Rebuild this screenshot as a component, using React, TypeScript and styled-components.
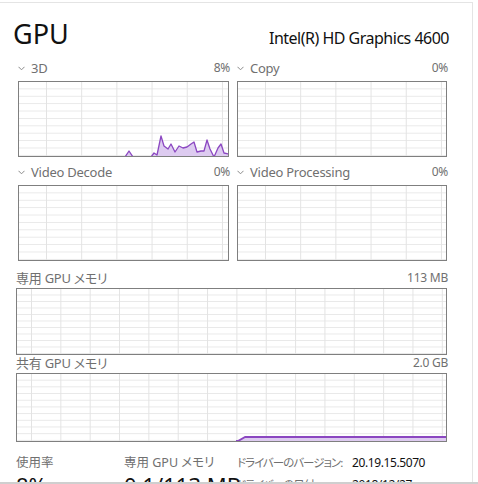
import styled, { createGlobalStyle } from 'styled-components';

const GlobalStyle = createGlobalStyle`
	html, body {
		margin: 0;
		height: 484px;
		overflow: hidden;
		background: #ffffff;
		font-family: 'Segoe UI', 'Noto Sans', 'Noto Sans CJK JP', sans-serif;
		font-feature-settings: 'palt';
	}
`;

const PURPLE = '#8b47c1';
const PURPLE_FILL = '#ddcbf0';
const MUTED = '#707070';

const Frame = styled.div`
	width: 473px;
	box-sizing: border-box;
	margin-top: 2px;
	padding: 13px 25px 0 16px;
	border-top: 1px solid #e4e4e4;
	border-right: 1px solid #e4e4e4;
	height: 482px;
`;

const Header = styled.div`
	display: flex;
	justify-content: space-between;
	align-items: baseline;
	height: 36px;
	margin: 0 -2px 8px -3px;
`;

const Title = styled.div`
	font-size: 27px;
	line-height: 36px;
	color: #111;
`;

const Adapter = styled.div`
	font-size: 16px;
	line-height: 36px;
	letter-spacing: -0.5px;
	color: #111;
`;

const SmallGrid = styled.div`
	display: grid;
	grid-template-columns: 211px 210px;
	column-gap: 8px;
	row-gap: 7px;
	padding: 0 1px 0 2px;
`;

const Panel = styled.div`
	display: flex;
	flex-direction: column;
`;

const Label = styled.div<{ $top?: number; $bottom?: number }>`
	display: flex;
	justify-content: space-between;
	align-items: center;
	font-size: 13px;
	line-height: 16px;
	height: 16px;
	letter-spacing: -0.25px;
	color: ${MUTED};
	margin-top: ${p => p.$top ?? 0}px;
	margin-bottom: ${p => p.$bottom ?? 0}px;
	white-space: nowrap;
`;

const LabelName = styled.span`
	display: flex;
	align-items: center;
	gap: 6px;
`;

const Value = styled.span`
	margin-right: -1px;
	font-size: 12px;
`;

const Chart = styled.div<{ $h: number; $cx: number; $cy: number; $ox: number }>`
	height: ${p => p.$h}px;
	box-sizing: border-box;
	border: 1px solid #7f7f7f;
	background-color: #fff;
	background-image: linear-gradient(to right, #e3e3e3 1px, transparent 1px),
		linear-gradient(to bottom, #e8e8e8 1px, transparent 1px);
	background-size: ${p => p.$cx}px 100%, 100% ${p => p.$cy}px;
	background-position: ${p => p.$ox}px 0, 0 ${p => p.$cy - 1}px;
	overflow: hidden;
`;

const Plot = styled.svg`
	display: block;
	width: 100%;
	height: 100%;
`;

const Stats = styled.div`
	display: grid;
	grid-template-columns: 108px 113px auto;
	margin-top: 13px;
`;

const StatCol = styled.div`
	display: flex;
	flex-direction: column;
`;

const StatLabel = styled.div`
	font-size: 12.5px;
	line-height: 16px;
	color: ${MUTED};
	white-space: nowrap;
`;

const StatBig = styled.div`
	font-size: 22px;
	line-height: 28px;
	color: #111;
	white-space: nowrap;
`;

const DriverGrid = styled.div`
	display: grid;
	grid-template-columns: 115px auto;
	font-size: 12px;
	line-height: 15px;
	white-space: nowrap;
`;

const DriverKey = styled.div`
	color: ${MUTED};
	font-size: 11.5px;
	letter-spacing: -1px;
`;

const DriverVal = styled.div`
	color: #111;
	letter-spacing: -0.4px;
`;

const BottomEdge = styled.div`
	position: fixed;
	left: 0;
	right: 0;
	bottom: 0;
	height: 2px;
	background: #cfcfcf;
`;

const Chevron = () => (
	<svg width="7" height="5" viewBox="0 0 7 5">
		<polyline points="0.5,0.8 3.5,3.8 6.5,0.8" fill="none" stroke="#8a8a8a" strokeWidth="1" />
	</svg>
);

const pts3d: [number, number][] = [
	[104, 75], [106, 75], [110, 69], [114, 75], [130, 75], [132, 75], [135, 71], [138, 73], [142, 54],
	[145, 64], [149, 67], [152, 62], [156, 70], [160, 64], [164, 66], [168, 65], [172, 62],
	[175, 60], [178, 70], [182, 69], [185, 69], [188, 58], [191, 67], [195, 75], [199, 66],
	[202, 62], [205, 71], [210, 72],
];

interface TraceProps {
	w: number;
	h: number;
	points: [number, number][];
	weight?: number;
}

const Trace = ({ w, h, points, weight = 1.3 }: TraceProps) => {
	const line = points.map(p => p.join(',')).join(' ');
	const first = points[0];
	const last = points[points.length - 1];
	const area = `${first[0]},${h} ${line} ${last[0]},${h}`;
	return (
		<Plot viewBox={`0 0 ${w} ${h}`} preserveAspectRatio="none">
			<polygon points={area} fill={PURPLE_FILL} />
			<polyline points={line} fill="none" stroke={PURPLE} strokeWidth={weight} strokeLinejoin="round" />
		</Plot>
	);
};

const engines = [
	{ name: '3D', value: '8%', trace: pts3d },
	{ name: 'Copy', value: '0%' },
	{ name: 'Video Decode', value: '0%' },
	{ name: 'Video Processing', value: '0%' },
];

const App = () => (
	<>
		<GlobalStyle />
		<Frame>
			<Header>
				<Title>GPU</Title>
				<Adapter>Intel(R) HD Graphics 4600</Adapter>
			</Header>
			<SmallGrid>
				{engines.map(e => (
					<Panel key={e.name}>
						<Label $bottom={5}>
							<LabelName>
								<Chevron />
								{e.name}
							</LabelName>
							<Value>{e.value}</Value>
						</Label>
						<Chart $h={76} $cx={35.2} $cy={7.4} $ox={27}>
							{e.trace && <Trace w={209} h={74} points={e.trace} />}
						</Chart>
					</Panel>
				))}
			</SmallGrid>
			<Label $top={9} $bottom={2}>
				<span>専用 GPU メモリ</span>
				<Value>113 MB</Value>
			</Label>
			<Chart $h={67} $cx={29.35} $cy={6.5} $ox={14} />
			<Label $bottom={2}>
				<span>共有 GPU メモリ</span>
				<Value>2.0 GB</Value>
			</Label>
			<Chart $h={69} $cx={29.35} $cy={6.7} $ox={14}>
				<Trace w={429} h={67} points={[[219, 67], [221, 67], [228, 63], [429, 63]]} weight={2} />
			</Chart>
			<Stats>
				<StatCol>
					<StatLabel>使用率</StatLabel>
					<StatBig>8%</StatBig>
				</StatCol>
				<StatCol>
					<StatLabel>専用 GPU メモリ</StatLabel>
					<StatBig>0.1/113 MB</StatBig>
				</StatCol>
				<DriverGrid>
					<DriverKey>ドライバーのバージョン:</DriverKey>
					<DriverVal>20.19.15.5070</DriverVal>
					<DriverKey>ドライバーの日付:</DriverKey>
					<DriverVal>2018/12/27</DriverVal>
				</DriverGrid>
			</Stats>
		</Frame>
		<BottomEdge />
	</>
);

export default App;
